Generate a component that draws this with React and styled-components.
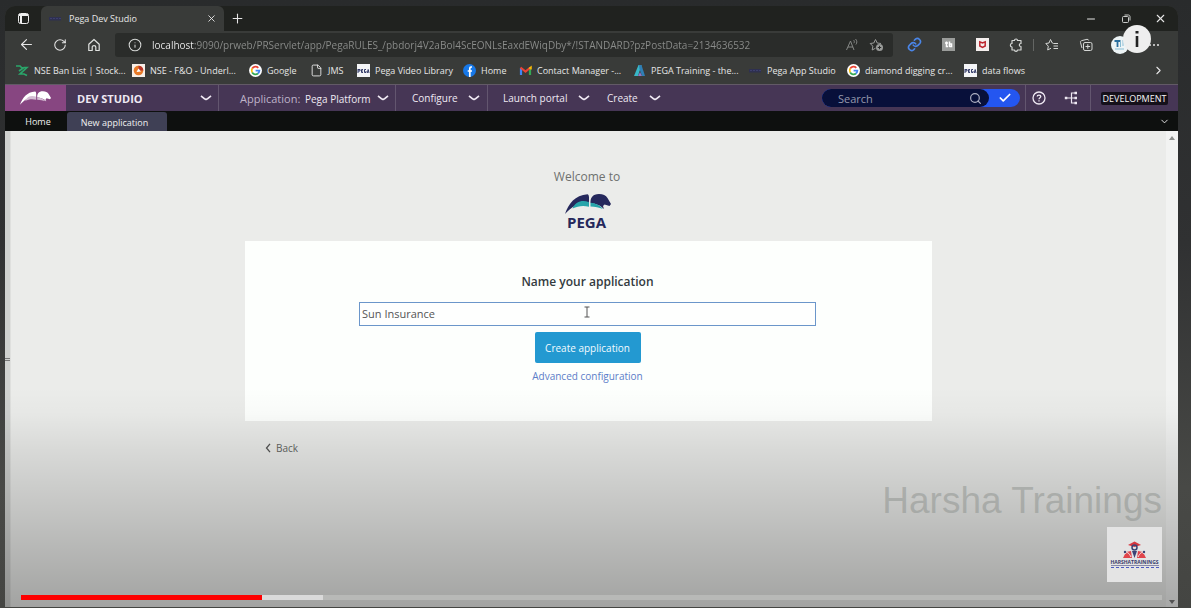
import React from 'react';
import styled, { createGlobalStyle } from 'styled-components';
import {
  ArrowLeft, RotateCw, Info, X, Plus, Minus,
  ChevronDown, ChevronRight, Search, Check, File,
} from 'lucide-react';

const Global = createGlobalStyle`
  * { box-sizing: border-box; }
  body { margin: 0; font-family: "Open Sans", "Noto Sans", sans-serif; font-size: 10px; }
  button, input { font: inherit; color: inherit; }
  button { display: flex; align-items: center; justify-content: center; padding: 0; border: 0; background: none; cursor: pointer; }
  a { color: inherit; text-decoration: none; }
  svg { display: block; flex: none; }
`;

const Stage = styled.div`
  position: relative;
  min-height: 100vh;
  padding: 6px 13px 1px 5px;
  display: flex;
  background: linear-gradient(#292b2c 0, #303132 40%, #484946 80%, #444542 100%);
`;
const BrowserWindow = styled.div`
  flex: 1;
  min-width: 0;
  display: flex;
  flex-direction: column;
  overflow: hidden;
  border-radius: 10px 10px 0 0;
  background: #393b39;
  color: #e6e6e6;
`;

const TitleBar = styled.header`
  height: 25px;
  display: flex;
  background: #20221f;
`;
const TabActions = styled.button`
  width: 36px;
`;
const BrowserTab = styled.div`
  width: 183px;
  padding: 0 7px 0 8px;
  display: flex;
  align-items: center;
  gap: 7px;
  border-radius: 6px 6px 0 0;
  background: #393b39;
  font-size: 9px;
  span { flex: 1; white-space: nowrap; }
`;
const NewTab = styled.button`
  width: 27px;
`;
const WindowControls = styled.div`
  margin-left: auto;
  display: flex;
`;
const WindowButton = styled.button`
  width: 35px;
`;

const Toolbar = styled.div`
  height: 27px;
  display: flex;
  align-items: center;
`;
const NavButtons = styled.div`
  display: flex;
  width: 110px;
  padding-left: 4px;
`;
const NavButton = styled.button`
  width: 34px;
  height: 24px;
`;
const AddressBar = styled.div`
  flex: 1;
  min-width: 0;
  height: 24px;
  padding: 0 9px 0 13px;
  display: flex;
  align-items: center;
  gap: 10px;
  border-radius: 3px;
  background: #2a2c2a;
  color: #999b99;
`;
const AddressInput = styled.input`
  flex: 1;
  min-width: 0;
  height: 20px;
  padding: 0;
  border: 0;
  outline: 0;
  font-size: 10px;
  color: transparent;
  background: linear-gradient(90deg, #f2f2f2 43px, #8c8e8c 43px);
  -webkit-background-clip: text;
  background-clip: text;
`;
const Extensions = styled.div`
  width: 285px;
  padding-left: 4px;
  display: flex;
  align-items: center;
`;
const ExtensionButton = styled.button`
  width: 34px;
  height: 24px;
`;
const Separator = styled.span`
  width: 1px;
  height: 12px;
  margin-right: 1px;
  background: #646664;
`;

const Bookmarks = styled.nav`
  height: 26px;
  padding: 0 13px 1px 11px;
  display: flex;
  align-items: center;
  font-size: 9px;
`;
const Bookmark = styled.a`
  width: ${(p) => p.$width}px;
  display: flex;
  align-items: center;
  gap: 5px;
  white-space: nowrap;
`;
const MoreBookmarks = styled.button`
  margin-left: auto;
`;

const StudioHeader = styled.header`
  height: 27px;
  display: flex;
  align-items: stretch;
  border-top: 1px solid #625a66;
  background: #463655;
  color: #efe9f3;
`;
const LogoCell = styled.a`
  width: 61px;
  display: flex;
  align-items: center;
  justify-content: center;
  background: #874681;
`;
const MenuButton = styled.button`
  width: ${(p) => p.$width}px;
  padding: 0 ${(p) => p.$end || 0}px 0 ${(p) => p.$start}px;
  justify-content: space-between;
  border-right: ${(p) => (p.$divided ? '1px solid #63566f' : '0')};
  font-size: ${(p) => (p.$strong ? 11 : 10)}px;
  font-weight: ${(p) => (p.$strong ? 700 : 400)};
  white-space: nowrap;
  small { font-size: 11px; color: #bfb3c9; margin-right: 2px; }
`;
const SearchBox = styled.form`
  align-self: center;
  width: 198px;
  height: 18px;
  margin: 0 5px 0 auto;
  display: flex;
  border-radius: 9px;
  background: #2456f0;
`;
const SearchField = styled.label`
  width: 167px;
  padding: 0 7px 0 16px;
  display: flex;
  align-items: center;
  border-radius: 9px;
  background: #08103a;
  color: #aeb0c2;
  input {
    flex: 1;
    min-width: 0;
    padding: 0;
    border: 0;
    outline: 0;
    background: none;
    font-size: 11px;
  }
  input::placeholder { color: #9599ad; }
`;
const SearchSubmit = styled.button`
  flex: 1;
  color: #fff;
`;
const HeaderTools = styled.div`
  width: 66px;
  padding: 0 12px 0 6px;
  display: flex;
  justify-content: space-between;
  border-left: 1px solid #63566f;
  border-right: 1px solid #63566f;
`;
const Environment = styled.div`
  width: 87px;
  display: flex;
  align-items: center;
  justify-content: center;
  span {
    padding: 0 2px;
    border-radius: 2px;
    background: #15101a;
    color: #f5f5f5;
    font-size: 9px;
    line-height: 13px;
  }
`;

const StudioTabs = styled.nav`
  height: 20px;
  padding: 1px 8px 0 6px;
  display: flex;
  background: #0e100f;
  color: #f0f0f0;
  font-size: 9px;
`;
const StudioTab = styled.button`
  width: ${(p) => p.$width}px;
  padding: ${(p) => (p.$active ? '2px 5px 0 0' : '0 2px 0 0')};
  border-radius: 3px 3px 0 0;
  background: ${(p) => (p.$active ? '#3f4055' : 'none')};
`;
const TabsMenu = styled.button`
  margin-left: auto;
`;

const Workspace = styled.div`
  flex: 1;
  display: flex;
  background: #ebecea;
`;
const SplitHandle = styled.div`
  width: 6px;
  padding-bottom: 20px;
  display: flex;
  align-items: center;
  justify-content: center;
  border-right: 1px solid #dfe0de;
  background: #cfd1cf;
`;
const Content = styled.main`
  flex: 1;
  min-width: 0;
  padding-top: 37px;
  display: flex;
  flex-direction: column;
  align-items: center;
`;
const Welcome = styled.p`
  margin: 0 0 8px;
  padding-right: 3px;
  font-size: 12px;
  line-height: 18px;
  color: #6e716f;
`;
const Brand = styled.div`
  height: 47px;
`;
const Card = styled.form`
  width: 100%;
  max-width: 687px;
  height: 180px;
  padding: 32px 116px 0 114px;
  display: flex;
  flex-direction: column;
  align-items: center;
  background: #fdfffd;
`;
const FieldLabel = styled.label`
  margin-bottom: 12px;
  font-size: 12px;
  font-weight: 600;
  line-height: 17px;
  color: #333b40;
`;
const NameInput = styled.input`
  width: 100%;
  height: 24px;
  margin-bottom: 6px;
  padding: 0 2px 1px;
  border: 1px solid #6b96ca;
  outline: 0;
  background: #fefffe;
  font-size: 11px;
  color: #555;
`;
const PrimaryButton = styled.button`
  width: 106px;
  height: 31px;
  margin-bottom: 5px;
  border-radius: 2px;
  background: #2399d1;
  color: #f3fbff;
  font-size: 10px;
`;
const TextLink = styled.a`
  font-size: 10px;
  line-height: 16px;
  color: #5c7dc8;
`;
const BackRow = styled.div`
  width: 100%;
  max-width: 687px;
  padding: 18px 19px 0;
`;
const BackButton = styled.button`
  gap: 4px;
  font-size: 10px;
  line-height: 18px;
  color: #626562;
`;
const ScrollTrack = styled.div`
  width: 12px;
  padding: 5px 2px 3px;
  display: flex;
  flex-direction: column;
  justify-content: space-between;
  align-items: center;
  background: #f2f3f2;
`;

const Shade = styled.div`
  position: absolute;
  left: 5px;
  right: 13px;
  bottom: 1px;
  height: 220px;
  pointer-events: none;
  background: linear-gradient(rgba(0, 0, 0, 0) 0, rgba(0, 0, 0, 0.02) 12%, rgba(0, 0, 0, 0.08) 28%, rgba(0, 0, 0, 0.18) 60%, rgba(0, 0, 0, 0.31) 100%);
`;
const TextCursor = styled.svg`
  position: absolute;
  left: 584px;
  top: 306px;
`;
const InfoBadge = styled.button`
  position: absolute;
  right: 40px;
  top: 25px;
  width: 28px;
  height: 28px;
  border-radius: 50%;
  background: #eeeeee;
`;
const Watermark = styled.div`
  position: absolute;
  right: 29px;
  bottom: 84px;
  font-family: "Liberation Sans", Arial, sans-serif;
  font-size: 37px;
  line-height: 46px;
  color: rgba(140, 144, 140, 0.5);
  white-space: nowrap;
`;
const ChannelLogo = styled.div`
  position: absolute;
  right: 29px;
  bottom: 26px;
  width: 55px;
  height: 55px;
  padding-top: 14px;
  display: flex;
  flex-direction: column;
  align-items: center;
  background: #e4e4e4;
  color: #363b6b;
  font-size: 5px;
  font-weight: 700;
  line-height: 6px;
`;
const Tagline = styled.span`
  width: 48px;
  height: 3px;
  border-top: 1px solid #8788a8;
  border-bottom: 1px dashed #4c5cc0;
`;
const VideoProgress = styled.div`
  position: absolute;
  left: 21px;
  right: 29px;
  bottom: 8px;
  height: 5px;
  display: flex;
  background: #b8b9b7;
`;
const Played = styled.div`
  width: ${(p) => p.$share}%;
  background: #fe0000;
`;
const Buffered = styled.div`
  width: ${(p) => p.$share}%;
  background: #dadada;
`;

const HorseShape = ({ dark, wing }) => (
  <>
    <path d="M0 20C3.500 10 10 1 22.500.3c1.500.2 1.800 3 1.400 8.700C14 8.500 7 12 0 20z" fill={dark} />
    <path d="M7.500 14.500C11 6.500 18 6 24 8.200v4.500c-6-1.500-11-.8-16.500 1.800z" fill={wing} />
    <path d="M25.500 9c-.3-5 2-9 8.500-9 4 0 7 1.500 8.500 4l3.500 6-1.500 2-5-1.500L38 12l1 3c-4-4-8-5-13.500-6z" fill={dark} />
    <path d="M25.500 8.800c5 .2 9.500 2.700 12.500 6.200-4-1.500-8-2.300-12.500-2.400z" fill={wing} />
  </>
);

const TabPanelIcon = () => (
  <svg width="13" height="13" viewBox="0 0 13 13" fill="none" stroke="#eee">
    <rect x="1.500" y="1.500" width="10" height="10" rx="2" />
    <path d="M2 3h9M4 3v8" strokeWidth="2" />
  </svg>
);
const RestoreIcon = () => (
  <svg width="10" height="10" viewBox="0 0 10 10" fill="none" stroke="#c8cac8">
    <rect x="1.500" y="2.500" width="6" height="6" rx="1" />
    <path d="M3.500 1h4c.8 0 1.500.7 1.500 1.500v4" />
  </svg>
);
const HomeIcon = () => (
  <svg width="14" height="14" viewBox="0 0 14 14" fill="none" stroke="#e0e2e0" strokeWidth="1.200" strokeLinejoin="round">
    <path d="M1.800 6.200 7 1.500l5.200 4.700v6.300H8.800V9c0-1.800-3.600-1.800-3.600 0v3.500H1.800z" />
  </svg>
);
const PuzzleIcon = () => (
  <svg width="14" height="14" viewBox="0 0 14 14" fill="none" stroke="#d5d7d5" strokeWidth="1.200" strokeLinejoin="round">
    <path d="M3 2.500h2.500c0-2 3-2 3 0H12v3c-2.300 0-2.300 3 0 3v3.500H8.500c0 1.800-3 1.800-3 0H3V9C.8 9 .8 5.500 3 5.500z" />
  </svg>
);
const GoogleIcon = () => (
  <svg width="13" height="13" viewBox="0 0 13 13">
    <circle cx="6.500" cy="6.500" r="6.500" fill="#fff" />
    <g fill="none" strokeWidth="1.800">
      <path d="M9.300 3.800A3.900 3.900 0 0 0 3.200 4.500" stroke="#ea4335" />
      <path d="M3.200 4.500a3.900 3.900 0 0 0 0 4" stroke="#fbbc05" />
      <path d="M3.200 8.500a3.900 3.900 0 0 0 5.800 1" stroke="#34a853" />
      <path d="M9 9.500a3.800 3.800 0 0 0 1.400-2.900H6.600" stroke="#4285f4" />
    </g>
  </svg>
);
const NseIcon = () => (
  <svg width="13" height="13" viewBox="0 0 13 13" fill="none" stroke="#2aa66a" strokeWidth="1.700">
    <path d="M0 2h4l3 3M3 7l5-3.500h3L4 10h4l3 1.500" />
  </svg>
);
const FoIcon = () => (
  <svg width="13" height="13" viewBox="0 0 13 13">
    <path d="M0 0h13v13H0z" fill="#f8efe8" />
    <circle cx="6.500" cy="6.500" r="4.800" fill="#e87a28" />
    <path d="M6.500 1.700a4.800 4.800 0 0 1 4.800 4.800H6.500z" fill="#b7352a" />
    <path d="m4.500 8 2-3.500 2.500 3z" fill="#fff" />
  </svg>
);
const PegaIcon = () => (
  <svg width="13" height="13" viewBox="0 0 13 13">
    <path d="M0 0h13v13H0z" fill="#f4f5f7" />
    <path d="M1 5v4M1 5.500h2v1.500H1M6 5.500H4.500v3H6M4.500 7H6M9 5.500H7.500v3H9V7M10.300 9l.9-3.500L12 9" fill="none" stroke="#333b68" />
  </svg>
);
const DimPegaIcon = () => (
  <svg width="13" height="13" viewBox="0 0 13 13">
    <path d="M0 5h12v3.500H0z" fill="#2e3050" />
    <path d="M1 6.500h11" stroke="#3d3f6c" strokeDasharray="2 1" />
  </svg>
);
const FacebookIcon = () => (
  <svg width="13" height="13" viewBox="0 0 13 13">
    <circle cx="6.500" cy="6.500" r="6.500" fill="#1778e8" />
    <path d="M9 3H8c-1 0-1.200.6-1.200 1.500V13M4.700 7H9" fill="none" stroke="#fff" strokeWidth="1.700" />
  </svg>
);
const GmailIcon = () => (
  <svg width="13" height="13" viewBox="0 0 13 13" fill="none" strokeWidth="2.200">
    <path d="M2 11V4" stroke="#4285f4" />
    <path d="M11 11V4" stroke="#34a853" />
    <path d="m1.500 3.500 5 4 5-4" stroke="#ea4335" />
    <path d="m10 4.500 2-1.500v2.500" stroke="#fbbc05" strokeWidth="1.500" />
  </svg>
);
const TrainingIcon = () => (
  <svg width="13" height="13" viewBox="0 0 13 13">
    <path d="M5.500 1h3L5 12H1z" fill="#38b7c7" />
    <path d="M6 1h2.500L12 12H9L6.500 5z" fill="#2f7fb5" />
    <path d="m5 12 2-4 2 4z" fill="#8b78c8" />
  </svg>
);
const ReadAloudIcon = () => (
  <svg width="14" height="14" viewBox="0 0 14 14" fill="none" stroke="#858785">
    <path d="M1.500 12 5.500 3l3.500 9M3 9h5M8.500 2c1 .8 1 2.300.4 3.200M10.500 1c1.700 1.500 1.700 4 .4 5.500" />
  </svg>
);
const AddFavoriteIcon = () => (
  <svg width="15" height="15" viewBox="0 0 15 15" fill="none" stroke="#999b99">
    <path d="M6.500 11.200 3.200 13l.6-3.800L1.200 6.500l3.600-.5L6.500 2.500 8.200 6l3.800.5" strokeLinejoin="round" />
    <circle cx="10.500" cy="10.500" r="3.500" fill="#999b99" stroke="none" />
    <path d="M8.800 10.500h3.400M10.500 8.800v3.400" stroke="#2a2c2a" />
  </svg>
);
const LinkIcon = () => (
  <svg width="15" height="15" viewBox="0 0 24 24" fill="none" stroke="#4a86e8" strokeWidth="2.600" strokeLinecap="round">
    <path d="M10 13a5 5 0 0 0 7.500.5l3-3a5 5 0 0 0-7-7l-1.700 1.700" />
    <path d="M14 11a5 5 0 0 0-7.500-.5l-3 3a5 5 0 0 0 7 7l1.700-1.700" />
  </svg>
);
const TbIcon = () => (
  <svg width="13" height="13" viewBox="0 0 13 13">
    <path d="M0 0h13v13H0z" fill="#9b9d9b" />
    <path d="M4.500 3.500v5H6M3 5h3M7.500 3.500V9M7.500 6h2v2.500h-2" fill="none" stroke="#fff" strokeWidth="1.500" />
  </svg>
);
const McafeeIcon = () => (
  <svg width="13" height="13" viewBox="0 0 13 13">
    <path d="M0 0h13v13H0z" fill="#f5efee" />
    <path d="M3.800 3.800V8l2.700 1.500L9.200 8V3.800L6.500 5z" fill="none" stroke="#bd252d" strokeWidth="1.500" />
  </svg>
);
const FavoritesIcon = () => (
  <svg width="15" height="14" viewBox="0 0 15 14" fill="none" stroke="#d5d7d5">
    <path d="M8.500 5.500 7.300 5 5.500 1.500 4 5l-3.200.5 2.500 2.700-.6 3.800L6 10.200M8.500 5.500H13M8.500 8H13M8.500 10.500H13" strokeLinejoin="round" />
  </svg>
);
const CollectionsIcon = () => (
  <svg width="15" height="14" viewBox="0 0 15 14" fill="none" stroke="#d5d7d5">
    <rect x="4.500" y="4.500" width="8.500" height="8" rx="1.500" />
    <path d="M8.800 6.200v4.600M6.500 8.500h4.600M3 10 1.500 4.500C1.300 3.500 1.500 3 2.500 2.700L8 1.300c1 0 1.500.4 1.700 1.200" />
  </svg>
);
const ProfileIcon = () => (
  <svg width="18" height="18" viewBox="0 0 18 18">
    <circle cx="9" cy="9" r="9" fill="#edf4f6" />
    <path d="M3.500 5h6M6.500 5v6" stroke="#2a6f9e" strokeWidth="1.800" />
    <path d="M9.500 5v6M12 4v6M4 13h9" stroke="#8bbdd4" />
  </svg>
);
const HelpIcon = () => (
  <svg width="14" height="14" viewBox="0 0 14 14" fill="none" stroke="#efe9f3" strokeWidth="1.300">
    <circle cx="7" cy="7" r="6" />
    <path d="M5.200 5.600C5.200 3.500 8.800 3.500 8.800 5.600 8.800 6.800 7 6.700 7 8.300M7 9.300v1.200" />
  </svg>
);
const TreeIcon = () => (
  <svg width="14" height="14" viewBox="0 0 14 14" fill="none" stroke="#efe9f3" strokeWidth="1.200">
    <path d="M2 7h9M11 2H7.500v10H11" />
    <path d="M.8 7h2.500M10.500 2H13M10.500 7H13M10.500 12H13" strokeWidth="2.400" />
  </svg>
);
const GraduateIcon = () => (
  <svg width="23" height="18" viewBox="0 0 23 18">
    <path d="m5 4 6.500-3.500L18 4l-6.500 2z" fill="#d7373f" />
    <circle cx="11.500" cy="6.500" r="2.500" fill="none" stroke="#3b4475" strokeWidth="1.500" />
    <path d="m0 17 3-6 5-1 1 7zM23 17l-3-6-5-1-1 7z" fill="#e0444b" />
    <path d="M2 13c2-3 4-1 6 3M21 13c-2-3-4-1-6 3" stroke="#eee" fill="none" />
    <path d="m9 10 2.500 7L14 10z" fill="#3b4475" />
    <circle cx="2" cy="11" r="1.200" fill="#3b4475" />
    <circle cx="21" cy="11" r="1.200" fill="#3b4475" />
  </svg>
);

const BOOKMARKS = [
  ['NSE Ban List | Stock...', 116, <NseIcon />],
  ['NSE - F&O - Underl...', 117, <FoIcon />],
  ['Google', 61, <GoogleIcon />],
  ['JMS', 47, <File size={13} strokeWidth={1.7} />],
  ['Pega Video Library', 106, <PegaIcon />],
  ['Home', 56, <FacebookIcon />],
  ['Contact Manager -...', 114, <GmailIcon />],
  ['PEGA Training - the...', 116, <TrainingIcon />],
  ['Pega App Studio', 98, <DimPegaIcon />],
  ['diamond digging cr...', 117, <GoogleIcon />],
  ['data flows', 70, <PegaIcon />],
];

const Caret = () => (
  <svg width="14" height="6" viewBox="0 0 14 6" fill="none" stroke="currentColor" strokeWidth="1.600">
    <path d="M2 .8C4 2.500 5.500 4 7 4.600 8.500 4 10 2.500 12 .8" />
  </svg>
);

export default function App() {
  return (
    <Stage>
      <Global />
      <BrowserWindow>
        <TitleBar>
          <TabActions aria-label="Tab actions"><TabPanelIcon /></TabActions>
          <BrowserTab>
            <DimPegaIcon />
            <span>Pega Dev Studio</span>
            <button aria-label="Close tab"><X size={11} strokeWidth={2} /></button>
          </BrowserTab>
          <NewTab aria-label="New tab"><Plus size={15} strokeWidth={1.7} /></NewTab>
          <WindowControls>
            <WindowButton aria-label="Minimise"><Minus size={12} /></WindowButton>
            <WindowButton aria-label="Restore"><RestoreIcon /></WindowButton>
            <WindowButton aria-label="Close"><X size={13} strokeWidth={2} /></WindowButton>
          </WindowControls>
        </TitleBar>

        <Toolbar>
          <NavButtons>
            <NavButton aria-label="Back"><ArrowLeft size={17} strokeWidth={1.6} /></NavButton>
            <NavButton aria-label="Reload"><RotateCw size={14} strokeWidth={1.8} /></NavButton>
            <NavButton aria-label="Home page"><HomeIcon /></NavButton>
          </NavButtons>
          <AddressBar>
            <Info size={14} strokeWidth={1.8} color="#d5d7d5" />
            <AddressInput
              aria-label="Address"
              defaultValue="localhost:9090/prweb/PRServlet/app/PegaRULES_/pbdorj4V2aBoI4ScEONLsEaxdEWiqDby*/!STANDARD?pzPostData=2134636532"
            />
            <button aria-label="Read aloud"><ReadAloudIcon /></button>
            <button aria-label="Add to favourites"><AddFavoriteIcon /></button>
          </AddressBar>
          <Extensions>
            <ExtensionButton aria-label="Copy link"><LinkIcon /></ExtensionButton>
            <ExtensionButton aria-label="TubeBuddy"><TbIcon /></ExtensionButton>
            <ExtensionButton aria-label="McAfee"><McafeeIcon /></ExtensionButton>
            <ExtensionButton aria-label="Extensions"><PuzzleIcon /></ExtensionButton>
            <Separator />
            <ExtensionButton aria-label="Favourites"><FavoritesIcon /></ExtensionButton>
            <ExtensionButton aria-label="Collections"><CollectionsIcon /></ExtensionButton>
            <ExtensionButton aria-label="Profile"><ProfileIcon /></ExtensionButton>
            <ExtensionButton aria-label="Settings">
              <svg width="12" height="4" viewBox="0 0 12 4" fill="#e6e6e6">
                <circle cx="2" cy="2" r="1" /><circle cx="6" cy="2" r="1" /><circle cx="10" cy="2" r="1" />
              </svg>
            </ExtensionButton>
          </Extensions>
        </Toolbar>

        <Bookmarks aria-label="Bookmarks">
          {BOOKMARKS.map(([label, width, icon]) => (
            <Bookmark key={label} href="#" $width={width}>{icon}{label}</Bookmark>
          ))}
          <MoreBookmarks aria-label="More bookmarks"><ChevronRight size={13} /></MoreBookmarks>
        </Bookmarks>

        <StudioHeader>
          <LogoCell href="#" aria-label="Pega">
            <svg width="31" height="14" viewBox="0 0 46 20"><HorseShape dark="#fff" wing="#d4bdd3" /></svg>
          </LogoCell>
          <MenuButton $width={153} $start={11} $end={5} $strong $divided>DEV STUDIO<Caret /></MenuButton>
          <MenuButton $width={177} $start={21} $end={5} $divided>
            <span><small>Application:</small> Pega Platform</span><Caret />
          </MenuButton>
          <MenuButton $width={92} $start={16} $end={6} $divided>Configure<Caret /></MenuButton>
          <MenuButton $width={103} $start={15}>Launch portal<Caret /></MenuButton>
          <MenuButton $width={71} $start={16}>Create<Caret /></MenuButton>
          <SearchBox onSubmit={(e) => e.preventDefault()}>
            <SearchField>
              <input type="text" placeholder="Search" aria-label="Search" />
              <Search size={13} strokeWidth={2.2} />
            </SearchField>
            <SearchSubmit aria-label="Run search"><Check size={14} strokeWidth={3} /></SearchSubmit>
          </SearchBox>
          <HeaderTools>
            <button aria-label="Help"><HelpIcon /></button>
            <button aria-label="Branches"><TreeIcon /></button>
          </HeaderTools>
          <Environment><span>DEVELOPMENT</span></Environment>
        </StudioHeader>

        <StudioTabs aria-label="Open tabs">
          <StudioTab $width={56}>Home</StudioTab>
          <StudioTab $width={100} $active>New application</StudioTab>
          <TabsMenu aria-label="Tab list"><ChevronDown size={11} /></TabsMenu>
        </StudioTabs>

        <Workspace>
          <SplitHandle>
            <svg width="5" height="5" viewBox="0 0 5 5" stroke="#777"><path d="M0 1.500h5M0 3.500h5" /></svg>
          </SplitHandle>
          <Content>
            <Welcome>Welcome to</Welcome>
            <Brand>
              <svg width="48" height="40" viewBox="0 0 48 40" role="img" aria-label="Pega">
                <HorseShape dark="#25285c" wing="#27a4aa" />
                <text x="2" y="34" fontFamily="Open Sans, sans-serif" fontSize="15" fontWeight="700" fill="#25285c">PEGA</text>
              </svg>
            </Brand>
            <Card onSubmit={(e) => e.preventDefault()}>
              <FieldLabel htmlFor="app-name">Name your application</FieldLabel>
              <NameInput id="app-name" type="text" defaultValue="Sun Insurance" />
              <PrimaryButton type="submit">Create application</PrimaryButton>
              <TextLink href="#">Advanced configuration</TextLink>
            </Card>
            <BackRow>
              <BackButton>
                <svg width="8" height="10" viewBox="0 0 8 10" fill="none" stroke="#555" strokeWidth="1.300"><path d="M6 .8 2.500 5 6 9.200" /></svg>
                Back
              </BackButton>
            </BackRow>
          </Content>
          <ScrollTrack>
            <svg width="6" height="4" viewBox="0 0 6 4" fill="#8b8d8b"><path d="M0 4h6L3 0z" /></svg>
            <svg width="6" height="4" viewBox="0 0 6 4" fill="#777"><path d="M0 0h6L3 4z" /></svg>
          </ScrollTrack>
        </Workspace>
      </BrowserWindow>

      <Shade />
      <TextCursor width="6" height="12" viewBox="0 0 6 12" fill="none" stroke="#555">
        <path d="M.5 1h5M.5 11h5M3 1v10" />
      </TextCursor>
      <InfoBadge aria-label="More information">
        <svg width="4" height="18" viewBox="0 0 4 18" fill="#222"><path d="M.5 1h3v2.500h-3zM.7 6h2.600v11H.7z" /></svg>
      </InfoBadge>
      <Watermark>Harsha Trainings</Watermark>
      <ChannelLogo>
        <GraduateIcon />
        <span>HARSHATRAININGS</span>
        <Tagline />
      </ChannelLogo>
      <VideoProgress role="progressbar" aria-valuenow={21} aria-label="Video progress">
        <Played $share={21.1} />
        <Buffered $share={5.4} />
      </VideoProgress>
    </Stage>
  );
}
